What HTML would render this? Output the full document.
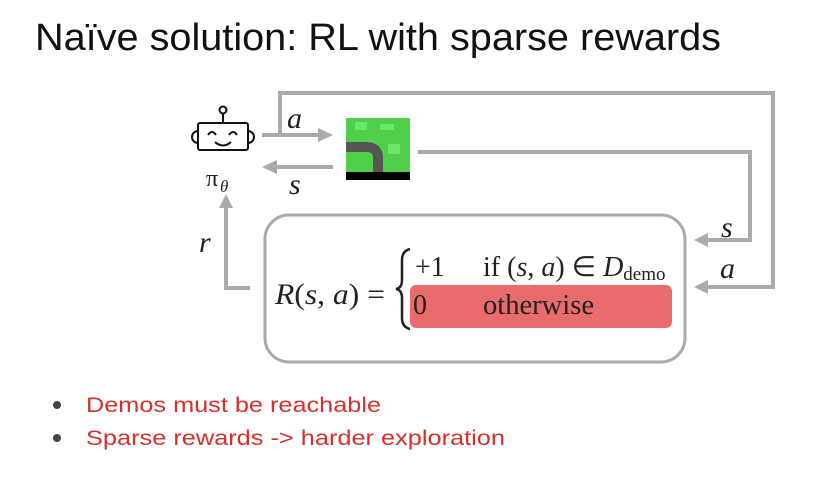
<!DOCTYPE html>
<html><head><meta charset="utf-8"><style>
html,body{margin:0;padding:0;background:#fff;}
svg{display:block}
.m{font-family:"Liberation Serif",serif;font-style:italic;fill:#222}
.r{font-family:"Liberation Serif",serif;fill:#222}
</style></head><body>
<svg width="822" height="482" viewBox="0 0 822 482" xmlns="http://www.w3.org/2000/svg">
<text x="35" y="50" font-family="Liberation Sans, sans-serif" font-size="38" fill="#111" textLength="686" lengthAdjust="spacingAndGlyphs">Naïve solution: RL with sparse rewards</text>

<g stroke="#aaa" stroke-width="4" fill="none">
<path d="M280 135 V93 H773 V287 H705"/>
<path d="M418 152 H750 V240 H705"/>
<path d="M262 135 H322"/>
<path d="M333 167 H272"/>
<path d="M250 288 H226 V205"/>
</g>
<g fill="#aaa">
<polygon points="333,135 318,128 318,142"/>
<polygon points="262,167 277,160 277,174"/>
<polygon points="694,240 708,233 708,247"/>
<polygon points="694,287 708,280 708,294"/>
<polygon points="226,194 219,208 233,208"/>
</g>

<g stroke="#111" stroke-width="2" fill="none">
<rect x="198" y="123" width="50" height="27" rx="2"/>
<circle cx="223" cy="110" r="3.5"/>
<path d="M223 114 V123"/>
<path d="M198 131 a5 5 0 0 0 0 12"/>
<path d="M248 131 a5 5 0 0 1 0 12"/>
<path d="M208 135 q4 -6 8 0"/>
<path d="M229 135 q4 -6 8 0"/>
<path d="M215 142 q8 7 16 0"/>
</g>
<text x="206" y="186" class="r" font-size="24">π</text>
<text x="220" y="192" class="m" font-size="17">θ</text>

<rect x="346" y="118" width="64" height="62" fill="#4fcf4a"/>
<rect x="355" y="122" width="12" height="8" fill="#6ee468"/>
<rect x="388" y="144" width="12" height="10" fill="#6ee468"/>
<rect x="380" y="124" width="14" height="6" fill="#6ee468"/>
<path d="M346 147 H366 Q378 147 378 158 V172" stroke="#555" stroke-width="10" fill="none"/>
<rect x="346" y="172" width="64" height="8" fill="#000"/>

<text x="287" y="128" class="m" font-size="30">a</text>
<text x="289" y="194" class="m" font-size="30">s</text>
<text x="199" y="252" class="m" font-size="30">r</text>
<text x="721" y="237" class="m" font-size="30">s</text>
<text x="720" y="278" class="m" font-size="30">a</text>

<rect x="265" y="215" width="420" height="147" rx="24" fill="none" stroke="#aaa" stroke-width="3"/>
<rect x="410" y="285" width="262" height="43" rx="6" fill="#ea6b6b"/>
<text x="275" y="304" font-size="30" class="r" textLength="110" lengthAdjust="spacingAndGlyphs"><tspan font-style="italic">R</tspan>(<tspan font-style="italic">s</tspan>, <tspan font-style="italic">a</tspan>) =</text>
<path d="M410 249 Q402 251 402 260 V280 Q402 288 396 289 Q402 290 402 298 V318 Q402 327 410 329" stroke="#222" stroke-width="2.5" fill="none"/>
<text x="415" y="276" class="r" font-size="28">+1</text>
<text x="483" y="276" class="r" font-size="28">if (<tspan font-style="italic">s</tspan>, <tspan font-style="italic">a</tspan>) ∈ <tspan font-style="italic">D</tspan><tspan font-size="19" dy="4">demo</tspan></text>
<text x="413" y="314" class="r" font-size="28">0</text>
<text x="483" y="314" class="r" font-size="28" textLength="111" lengthAdjust="spacingAndGlyphs">otherwise</text>

<circle cx="57" cy="405" r="4" fill="#444"/>
<circle cx="57" cy="438" r="4" fill="#444"/>
<text x="86" y="412" font-family="Liberation Sans, sans-serif" font-size="21" fill="#d6302b" textLength="295" lengthAdjust="spacingAndGlyphs">Demos must be reachable</text>
<text x="86" y="445" font-family="Liberation Sans, sans-serif" font-size="21" fill="#d6302b" textLength="419" lengthAdjust="spacingAndGlyphs">Sparse rewards -&gt; harder exploration</text>
</svg>
</body></html>
